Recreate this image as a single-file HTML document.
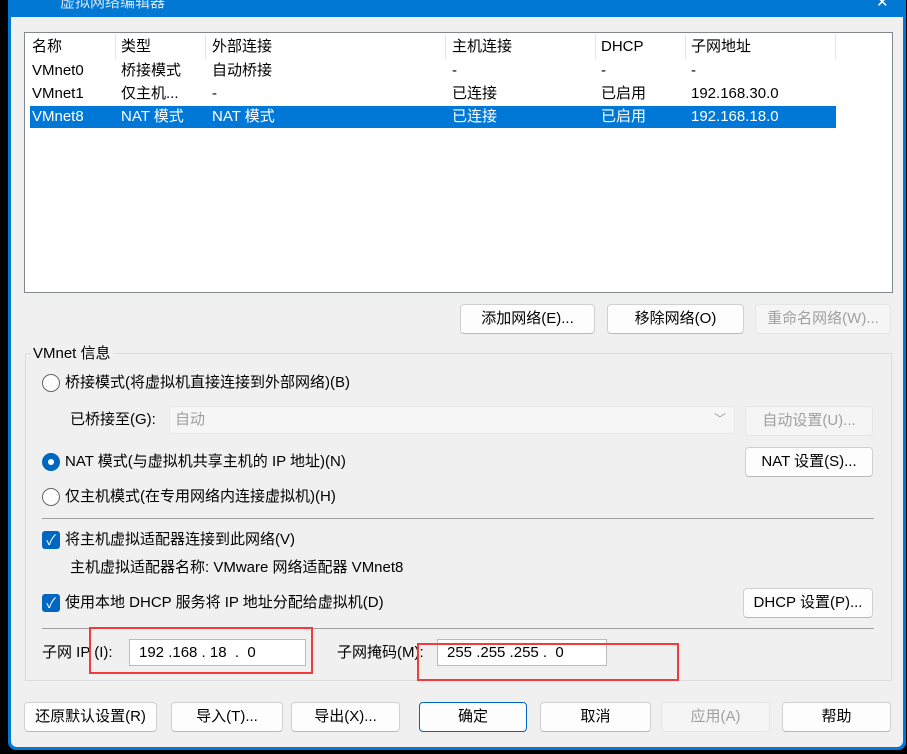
<!DOCTYPE html><html><head><meta charset="utf-8"><style>
*{box-sizing:border-box;margin:0;padding:0}
body{width:907px;height:754px;background:#000;position:relative;overflow:hidden;font-family:"Liberation Sans","Noto Sans CJK SC",sans-serif;font-size:15px;color:#000}
.a{position:absolute;white-space:nowrap;line-height:18px}
.win{position:absolute;left:8px;top:0;width:898px;height:750px;background:#0078d4;border-radius:0 0 8px 8px}
.body{position:absolute;left:11px;top:17px;width:892px;height:730px;background:#f0f0f0;border-radius:0 0 6px 6px}
.btn{position:absolute;height:30px;background:#fdfdfd;border:1px solid #d0d0d0;border-bottom-color:#b8b8b8;border-radius:4px;text-align:center;line-height:28px}
.dis{background:#f5f5f5;border-color:#e5e5e5;color:#a0a0a0}
.rad{position:absolute;width:18px;height:18px;border:1px solid #666;border-radius:50%;background:#fff}
.chk{position:absolute;width:18px;height:18px;border-radius:3px;background:#0067c0;color:#fff;font-size:14px;line-height:18px;text-align:center}
.hl{position:absolute;height:1px;background:#a0a0a0}
</style></head><body>
<div class="win"></div>
<div class="a" style="left:60px;top:-6px;color:#cfe4f7;font-size:15px">虚拟网络编辑器</div>
<div class="a" style="left:876px;top:-6px;color:#fff">✕</div>
<div class="body"></div>
<div class="a" style="left:24px;top:32px;width:869px;height:261px;background:#fff;border:1px solid #828790"></div>
<div class="a" style="left:30px;top:106px;width:806px;height:22px;background:#0078d7"></div>
<div class="a" style="left:115px;top:34px;width:1px;height:25px;background:#e5e5e5"></div>
<div class="a" style="left:205px;top:34px;width:1px;height:25px;background:#e5e5e5"></div>
<div class="a" style="left:445px;top:34px;width:1px;height:25px;background:#e5e5e5"></div>
<div class="a" style="left:595px;top:34px;width:1px;height:25px;background:#e5e5e5"></div>
<div class="a" style="left:685px;top:34px;width:1px;height:25px;background:#e5e5e5"></div>
<div class="a" style="left:835px;top:34px;width:1px;height:25px;background:#e5e5e5"></div>
<div class="a" style="top:38px;left:32px">名称</div><div class="a" style="top:38px;left:121px">类型</div><div class="a" style="top:38px;left:212px">外部连接</div><div class="a" style="top:38px;left:452px">主机连接</div><div class="a" style="top:38px;left:601px">DHCP</div><div class="a" style="top:38px;left:691px">子网地址</div>
<div class="a" style="top:62px;left:32px">VMnet0</div><div class="a" style="top:62px;left:121px">桥接模式</div><div class="a" style="top:62px;left:212px">自动桥接</div><div class="a" style="top:62px;left:452px">-</div><div class="a" style="top:62px;left:601px">-</div><div class="a" style="top:62px;left:691px">-</div>
<div class="a" style="top:85px;left:32px">VMnet1</div><div class="a" style="top:85px;left:121px">仅主机...</div><div class="a" style="top:85px;left:212px">-</div><div class="a" style="top:85px;left:452px">已连接</div><div class="a" style="top:85px;left:601px">已启用</div><div class="a" style="top:85px;left:691px">192.168.30.0</div>
<div style="color:#fff"><div class="a" style="top:108px;left:32px">VMnet8</div><div class="a" style="top:108px;left:121px">NAT 模式</div><div class="a" style="top:108px;left:212px">NAT 模式</div><div class="a" style="top:108px;left:452px">已连接</div><div class="a" style="top:108px;left:601px">已启用</div><div class="a" style="top:108px;left:691px">192.168.18.0</div></div>
<div class="btn" style="left:460px;top:304px;width:135px">添加网络(E)...</div>
<div class="btn" style="left:607px;top:304px;width:137px">移除网络(O)</div>
<div class="btn dis" style="left:755px;top:304px;width:136px">重命名网络(W)...</div>
<div class="a" style="left:25px;top:353px;width:867px;height:328px;border:1px solid #dcdcdc"></div>
<div class="a" style="left:31px;top:345px;background:#f0f0f0;padding:0 2px">VMnet 信息</div>
<div class="rad" style="left:42px;top:374px"></div><div class="a" style="left:65px;top:374px">桥接模式(将虚拟机直接连接到外部网络)(B)</div>
<div class="a" style="left:70px;top:411px">已桥接至(G):</div>
<div class="a" style="left:169px;top:406px;width:566px;height:28px;background:#f6f6f6;border:1px solid #e8e8e8;border-radius:3px;color:#a0a0a0;padding:4px 5px">自动<span style="position:absolute;right:8px;top:3px;font-size:12px">﹀</span></div>
<div class="btn dis" style="left:745px;top:406px;width:128px">自动设置(U)...</div>
<div class="rad" style="left:42px;top:453px;background:#0067c0;border-color:#0067c0"><div style="position:absolute;left:5px;top:5px;width:6px;height:6px;background:#fff;border-radius:50%"></div></div><div class="a" style="left:65px;top:453px">NAT 模式(与虚拟机共享主机的 IP 地址)(N)</div>
<div class="btn" style="left:745px;top:447px;width:128px">NAT 设置(S)...</div>
<div class="rad" style="left:42px;top:488px"></div><div class="a" style="left:65px;top:488px">仅主机模式(在专用网络内连接虚拟机)(H)</div>
<div class="hl" style="left:42px;top:518px;width:832px"></div>
<div class="chk" style="left:42px;top:531px">✓</div><div class="a" style="left:65px;top:531px">将主机虚拟适配器连接到此网络(V)</div>
<div class="a" style="left:70px;top:559px">主机虚拟适配器名称: VMware 网络适配器 VMnet8</div>
<div class="chk" style="left:42px;top:594px">✓</div><div class="a" style="left:65px;top:594px">使用本地 DHCP 服务将 IP 地址分配给虚拟机(D)</div>
<div class="btn" style="left:743px;top:588px;width:130px">DHCP 设置(P)...</div>
<div class="hl" style="left:42px;top:628px;width:832px"></div>
<div class="a" style="left:42px;top:644px">子网 IP (I):</div>
<div class="a" style="left:129px;top:639px;width:177px;height:27px;background:#fff;border:1px solid #bbb;padding:4px 9px">192 .168 . 18 &nbsp;. &nbsp;0</div>
<div class="a" style="left:337px;top:644px">子网掩码(M):</div>
<div class="a" style="left:437px;top:639px;width:170px;height:27px;background:#fff;border:1px solid #bbb;padding:4px 9px">255 .255 .255 . &nbsp;0</div>
<div class="a" style="left:89px;top:627px;width:224px;height:47px;border:2px solid #f03c3c"></div>
<div class="a" style="left:417px;top:643px;width:262px;height:38px;border:2px solid #f03c3c"></div>
<div class="btn" style="left:24px;top:702px;width:133px">还原默认设置(R)</div>
<div class="btn" style="left:171px;top:702px;width:112px">导入(T)...</div>
<div class="btn" style="left:291px;top:702px;width:109px">导出(X)...</div>
<div class="btn" style="left:419px;top:702px;width:108px;border:1px solid #0067c0">确定</div>
<div class="btn" style="left:540px;top:702px;width:111px">取消</div>
<div class="btn dis" style="left:661px;top:702px;width:109px">应用(A)</div>
<div class="btn" style="left:782px;top:702px;width:109px">帮助</div>
</body></html>
